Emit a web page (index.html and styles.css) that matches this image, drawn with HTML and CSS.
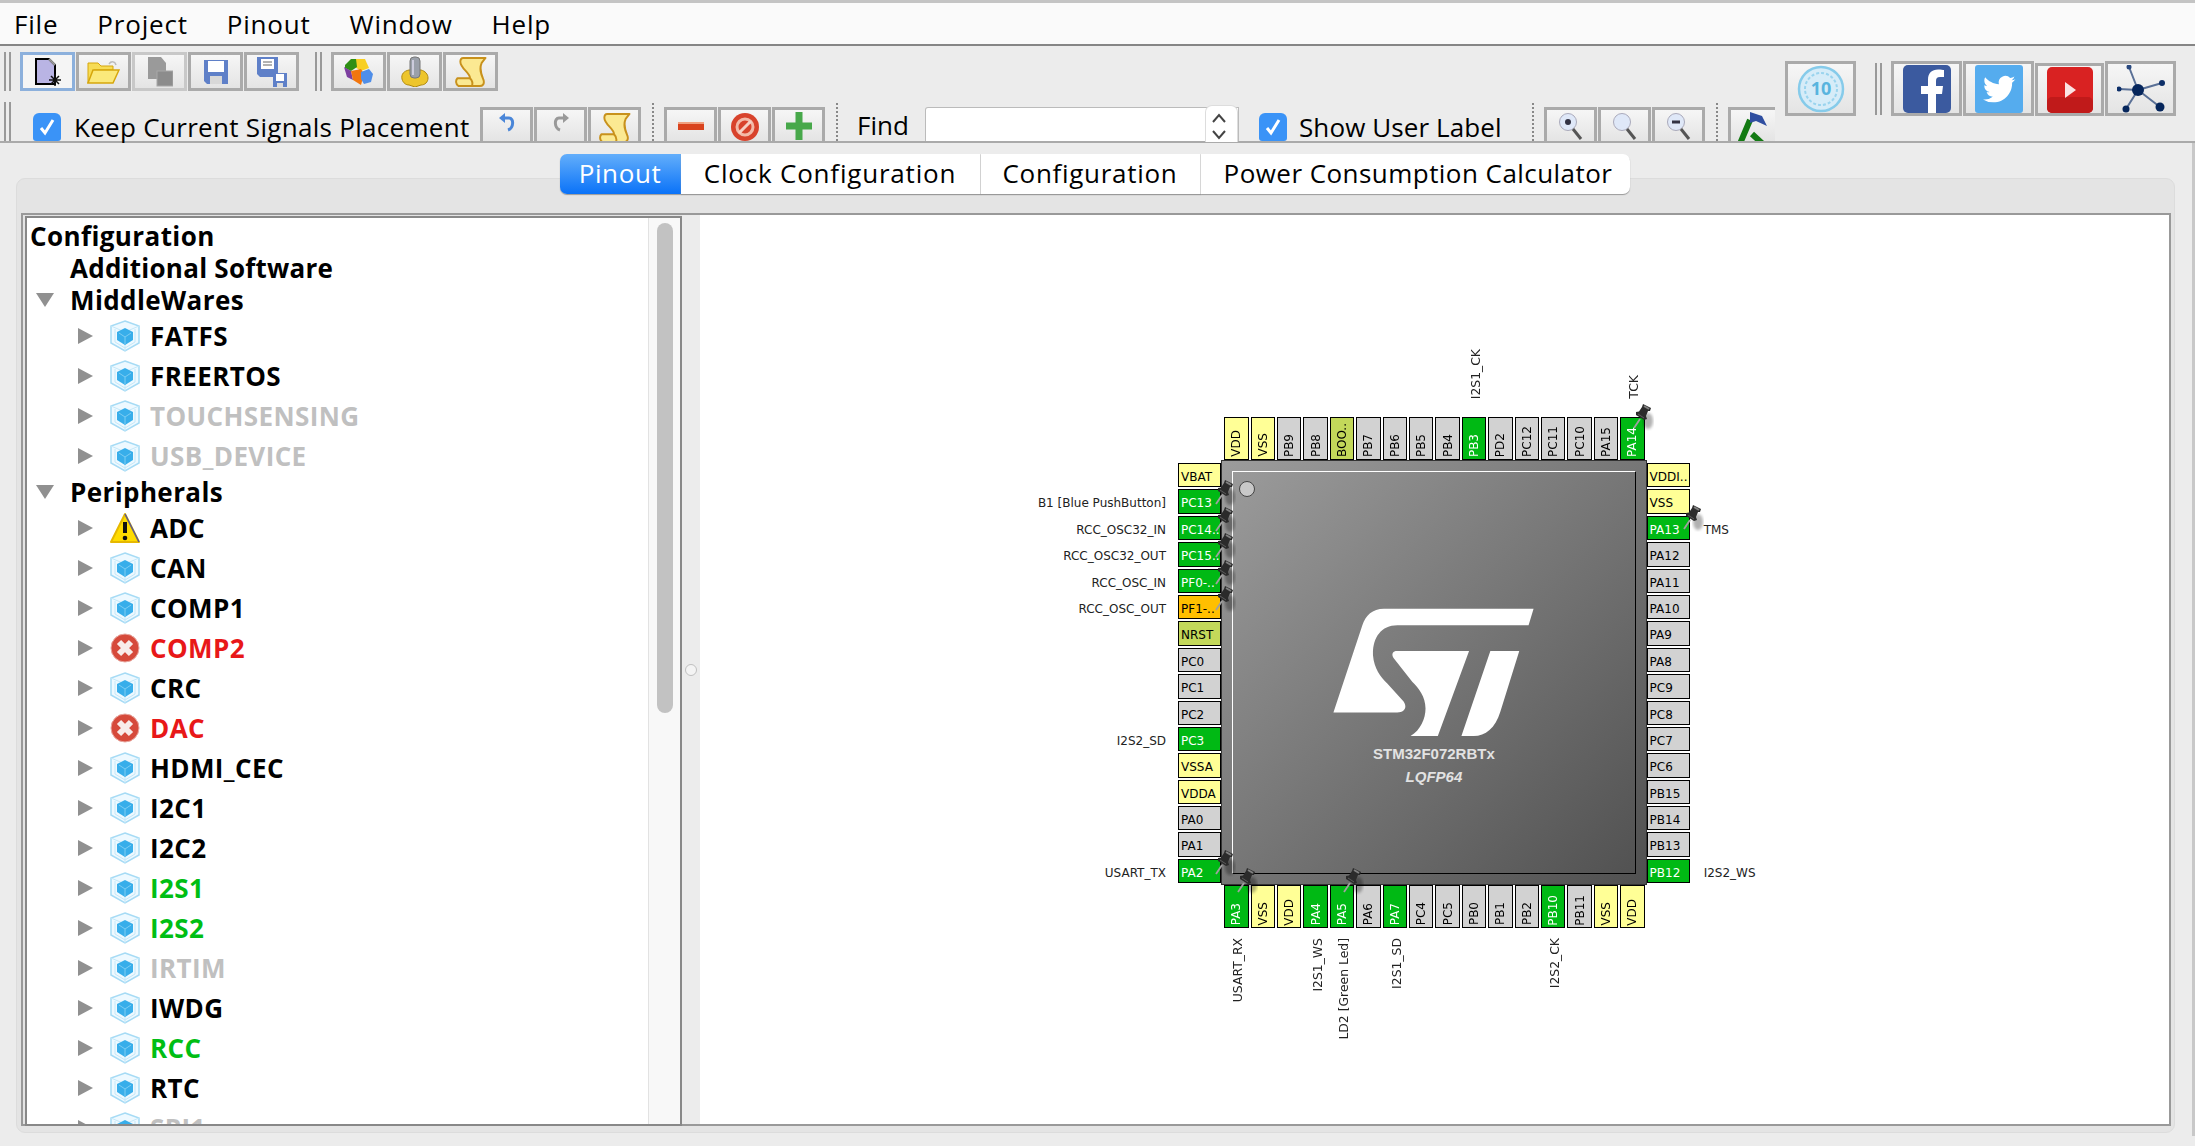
FILE: index.html
```html
<!DOCTYPE html>
<html lang="en">
<head>
    <meta charset="UTF-8">
    <title>STM32CubeMX</title>
    <link rel="stylesheet" href="styles.css">
</head>
<body>

    <!-- Shared icons -->
    <svg class="icon-defs" width="0" height="0">
        <filter id="soft"><feGaussianBlur stdDeviation="1.5"/></filter>
        <symbol id="cube" viewBox="0 0 32 32">
            <polygon points="16,1 30,6 30,23 16,31 2,23 2,6" fill="#eef9ff" stroke="#a6dbf5" stroke-width="1.5"/>
            <path d="M2 6l14 6 14-6M16 12v19M6 9v13l10 6 10-6V9" fill="none" stroke="#c4e8f9"/>
            <polygon points="16,8 24,12 24,20 16,25 8,20 8,12" fill="#38aeea"/>
            <path d="M16 17v7M16 17l-6-4M16 17l6-4" fill="none" stroke="#7ccdf3"/>
        </symbol>
        <symbol id="warn" viewBox="0 0 32 32">
            <polygon points="16,2 30,30 2,30" fill="#ffdc00" stroke="#e6b800" stroke-width="2" stroke-linejoin="round"/>
            <path d="M30 30l-14-28" stroke="#5a5a90" stroke-width="1.5"/>
            <path d="M16 10v11" stroke="#111" stroke-width="4"/>
            <circle cx="16" cy="26" r="2.3" fill="#111"/>
        </symbol>
        <symbol id="error" viewBox="0 0 32 32">
            <circle cx="16" cy="16" r="14" fill="#d64a3b" stroke="#e8a8a0"/>
            <path d="M10 10l12 12M22 10L10 22" stroke="#f8ecea" stroke-width="6"/>
        </symbol>
        <symbol id="pushpin" viewBox="0 0 26 30">
            <ellipse cx="15" cy="17" rx="5" ry="8" fill="#000" opacity=".3" filter="url(#soft)"/>
            <path d="M7 15L1 24" stroke="#a0a0a0" stroke-width="1.8"/>
            <path d="M10 0L18 4L17 7L15 7L13 12L14 15L11 16L3 11L3 8L6 7.500L9 3Z" fill="#2b2b2b"/>
            <path d="M11 2L16 5" stroke="#808080" stroke-width="2"/>
            <path d="M5 10L11 14" stroke="#5c5c5c"/>
        </symbol>
        <symbol id="scroll" viewBox="0 0 32 32">
            <path d="M8 2H31L27 7C24 14 27 20 29 25C30 29 28 31 25 31H3C0 29 0 25 2 23H15C15 17 5 13 5 6C5 4 6 2 8 2Z" fill="#fbe992" stroke="#c8911c" stroke-width="2" stroke-linejoin="round"/>
            <path d="M15 23C17 25 18 28 17 31" fill="none" stroke="#c8911c" stroke-width="2"/>
        </symbol>
    </svg>

    <!-- Menu -->
    <nav class="menubar">
        <span>File</span>
        <span>Project</span>
        <span>Pinout</span>
        <span>Window</span>
        <span>Help</span>
    </nav>

    <!-- Toolbars -->
    <header class="toolbars">
        <div class="tool-rows">
            <div class="tool-row row-one">
                <div class="grip"></div>
                <div class="btn-group">
                    <div class="btn btn-active">
                        <svg width="28" height="30" viewBox="0 0 28 30">
                            <path d="M2 2h13l6 6v19H2z" fill="#b9b4e4" stroke="#000" stroke-width="2"/>
                            <path d="M15 2l6 6" stroke="#999" stroke-width="2"/>
                            <path d="M21 17v12M15 23h12M17 19l8 8M25 19l-8 8" stroke="#111" stroke-width="1.5"/>
                        </svg>
                    </div>
                    <div class="btn">
                        <svg width="33" height="24" viewBox="0 0 33 24">
                            <path d="M1 3h10l3 3h12v4H7L1 23z" fill="#f7dc55" stroke="#d6a60c"/>
                            <path d="M6 10h26l-6 13H1z" fill="#fbe97b" stroke="#d6a60c" stroke-width="1.5"/>
                            <path d="M22 4c2-3 6-3 7 1" fill="none" stroke="#bbb" stroke-width="1.5"/>
                        </svg>
                    </div>
                    <div class="btn btn-off">
                        <svg width="26" height="30" viewBox="0 0 26 30">
                            <path d="M1 0h13l5 6v16H1z" fill="#9a9a9a"/>
                            <rect x="10" y="14" width="16" height="15" fill="#8c8c8c" stroke="#a8a8a8"/>
                        </svg>
                    </div>
                    <div class="btn">
                        <svg width="24" height="24" viewBox="0 0 24 24">
                            <path d="M0 0h24v24H3l-3-3z" fill="#5f80c8"/>
                            <rect x="4" y="1" width="16" height="11" fill="#fff"/>
                            <rect x="6" y="16" width="12" height="8" fill="#d8d8d8"/>
                        </svg>
                    </div>
                    <div class="btn">
                        <svg width="30" height="30" viewBox="0 0 30 30">
                            <path d="M0 0h21v20H3l-3-3z" fill="#5f80c8"/>
                            <rect x="4" y="2" width="13" height="10" fill="#fff"/>
                            <path d="M6 5h9M6 8h9" stroke="#666"/>
                            <rect x="16" y="16" width="14" height="14" fill="#5f80c8"/>
                            <rect x="19" y="17" width="8" height="7" fill="#fff"/>
                            <rect x="20" y="26" width="6" height="4" fill="#ddd"/>
                        </svg>
                    </div>
                </div>
                <div class="grip grip-mid"></div>
                <div class="btn-group">
                    <div class="btn">
                        <svg width="29" height="28" viewBox="0 0 29 28">
                            <path d="M11 1h10l4 9-8 3-6-4z" fill="#f7cf24"/>
                            <path d="M1 7l6-6h5l1 8-6 4-6-3z" fill="#2f8f15"/>
                            <path d="M0 9l7 4 2 9-6-3z" fill="#7d3fa0"/>
                            <path d="M7 13l10-2 3 5-3 11-8-5z" fill="#f2760e"/>
                            <path d="M17 14l8-3 4 5-2 8-7 2-3-5z" fill="#4f8ee8"/>
                        </svg>
                    </div>
                    <div class="btn">
                        <svg width="28" height="31" viewBox="0 0 28 31">
                            <path d="M8 14C3 15 0 18 1 23c1 4 4 6 7 6l6 2 6-2c4 0 7-3 7-7 0-4-3-7-7-8z" fill="#edc52c" stroke="#b08a10"/>
                            <rect x="9" y="1" width="10" height="21" rx="4" fill="#9aa0aa" stroke="#777"/>
                            <path d="M12 4v15" stroke="#ccd" stroke-width="2"/>
                        </svg>
                    </div>
                    <div class="btn"><svg width="32" height="31"><use href="#scroll"/></svg></div>
                </div>
            </div>

            <div class="tool-row row-two">
                <div class="grip grip-low"></div>
                <div class="check check-keep"><svg width="20" height="20" viewBox="0 0 20 20"><path d="M4 11l4 5 8-13" fill="none" stroke="#fff" stroke-width="3"/></svg></div>
                <span class="tool-label label-keep">Keep Current Signals Placement</span>
                <div class="btn-group group-low">
                    <div class="btn btn-small">
                        <svg width="16" height="20" viewBox="0 0 16 20">
                            <path d="M3 6h7c5 0 5 10-1 12" fill="none" stroke="#4a86d8" stroke-width="3"/>
                            <path d="M6 1L0 6l6 5z" fill="#4a86d8"/>
                        </svg>
                    </div>
                    <div class="btn btn-small">
                        <svg width="16" height="20" viewBox="0 0 16 20">
                            <path d="M13 6H6c-5 0-5 10 1 12" fill="none" stroke="#999" stroke-width="3"/>
                            <path d="M10 1l6 5-6 5z" fill="#999"/>
                        </svg>
                    </div>
                    <div class="btn btn-small"><svg width="32" height="31"><use href="#scroll"/></svg></div>
                </div>
                <div class="dots"></div>
                <div class="btn-group group-low">
                    <div class="btn btn-small btn-minus"><svg width="26" height="8"><rect width="26" height="8" fill="#d9431e"/><rect width="26" height="2" fill="#f0a080"/></svg></div>
                    <div class="btn btn-small">
                        <svg width="30" height="30" viewBox="0 0 30 30">
                            <circle cx="15" cy="15" r="14" fill="#d8432c"/>
                            <circle cx="15" cy="15" r="8" fill="none" stroke="#f3b9a8" stroke-width="3"/>
                            <path d="M9 21L21 9" stroke="#f6d0c4" stroke-width="3"/>
                        </svg>
                    </div>
                    <div class="btn btn-small"><svg width="26" height="28" viewBox="0 0 26 28"><path d="M13 0v28M0 14h26" stroke="#47a84a" stroke-width="7"/></svg></div>
                </div>
                <div class="dots"></div>
                <span class="tool-label label-find">Find</span>
                <div class="find-box">
                    <div class="find-spin">
                        <svg width="14" height="28" viewBox="0 0 14 28"><path d="M1 9l6-7 6 7M1 18l6 7 6-7" fill="none" stroke="#444" stroke-width="2"/></svg>
                    </div>
                </div>
                <div class="check check-user"><svg width="20" height="20" viewBox="0 0 20 20"><path d="M4 11l4 5 8-13" fill="none" stroke="#fff" stroke-width="3"/></svg></div>
                <span class="tool-label label-user">Show User Label</span>
                <div class="dots"></div>
                <div class="btn-group group-low">
                    <div class="btn btn-small">
                        <svg width="26" height="32" viewBox="0 0 26 32">
                            <circle cx="10" cy="10" r="8.5" fill="#dfe8f8" stroke="#aab"/>
                            <circle cx="10" cy="10" r="3" fill="#334"/>
                            <path d="M15 17l8 10" stroke="#555" stroke-width="3"/>
                        </svg>
                    </div>
                    <div class="btn btn-small">
                        <svg width="26" height="32" viewBox="0 0 26 32">
                            <circle cx="10" cy="10" r="8.5" fill="#dfe8f8" stroke="#aab"/>
                            <path d="M15 17l8 10" stroke="#555" stroke-width="3"/>
                        </svg>
                    </div>
                    <div class="btn btn-small">
                        <svg width="26" height="32" viewBox="0 0 26 32">
                            <circle cx="10" cy="10" r="8.5" fill="#dfe8f8" stroke="#aab"/>
                            <rect x="6" y="8.5" width="8" height="3" fill="#334"/>
                            <path d="M15 17l8 10" stroke="#555" stroke-width="3"/>
                        </svg>
                    </div>
                </div>
                <div class="dots"></div>
                <div class="btn btn-small btn-flag">
                    <svg width="30" height="34" viewBox="0 0 30 34">
                        <path d="M12 8L1 34h26L14 22" fill="none" stroke="#137a13" stroke-width="6"/>
                        <path d="M12 0l12 4 5 10-11-5-6 2z" fill="#2f4ea0"/>
                    </svg>
                </div>
            </div>
        </div>

        <div class="social">
            <div class="btn btn-big">
                <svg width="48" height="48" viewBox="0 0 48 48">
                    <circle cx="24" cy="24" r="22" fill="#d6ecf8" stroke="#86cbea" stroke-width="2.5"/>
                    <circle cx="24" cy="24" r="16" fill="none" stroke="#9ad4ee" stroke-width="2" stroke-dasharray="3 2"/>
                    <text x="24" y="30" class="ten">10</text>
                </svg>
            </div>
            <div class="grip grip-social"></div>
            <div class="btn btn-big">
                <svg width="48" height="48" viewBox="0 0 48 48">
                    <rect width="48" height="48" rx="5" fill="#3b5a9f"/>
                    <path d="M33 48V29h6l1-8h-7v-5c0-2.500 1-4 4-4h4V5c-1 0-3-.5-6-.5-6 0-10 3.500-10 10V21h-7v8h7v19z" fill="#fff"/>
                </svg>
            </div>
            <div class="btn btn-big">
                <svg width="48" height="48" viewBox="0 0 48 48">
                    <rect width="48" height="48" rx="3" fill="#55acee"/>
                    <g transform="translate(8 8) scale(1.35)">
                        <path d="M23.950 4.570a10 10 0 01-2.820.770 4.960 4.960 0 002.160-2.720c-.950.550-2 .950-3.120 1.170a4.920 4.920 0 00-8.380 4.480C7.690 8.090 4.070 6.130 1.640 3.160a4.820 4.820 0 00-.670 2.480c0 1.710.870 3.210 2.190 4.100a4.900 4.900 0 01-2.230-.620v.060a4.920 4.920 0 003.950 4.830 4.900 4.900 0 01-2.210.080 4.940 4.940 0 004.600 3.420A9.870 9.870 0 010 19.540a14 14 0 007.550 2.210c9.060 0 14.010-7.500 14.010-13.980 0-.210 0-.420-.020-.630a9.940 9.940 0 002.460-2.550z" fill="#fff"/>
                    </g>
                </svg>
            </div>
            <div class="btn btn-big btn-yt">
                <svg width="46" height="46" viewBox="0 0 46 46">
                    <rect width="46" height="46" rx="5" fill="#d92222"/>
                    <rect y="30" width="46" height="16" rx="5" fill="#c01a1a"/>
                    <polygon points="18,15 29,23 18,31" fill="#fbe3e3"/>
                </svg>
            </div>
            <div class="btn btn-big">
                <svg width="48" height="48" viewBox="0 0 48 48">
                    <path d="M21 25L12 2M21 25L45 18M21 25L2 24M21 25L9 44M21 25L43 42" stroke="#5a7096" stroke-width="2"/>
                    <circle cx="21" cy="25" r="6" fill="#06265c"/>
                    <circle cx="12" cy="2" r="2.500" fill="#2a4a80"/>
                    <circle cx="45" cy="18" r="3" fill="#0d2f68"/>
                    <circle cx="2" cy="24" r="2.500" fill="#0d2f68"/>
                    <circle cx="9" cy="44" r="3.500" fill="#06265c"/>
                    <circle cx="43" cy="42" r="4.500" fill="#06265c"/>
                </svg>
            </div>
        </div>
    </header>

    <main class="content">
        <div class="tabs">
            <div class="tab tab-pinout">Pinout</div>
            <div class="tab tab-clock">Clock Configuration</div>
            <div class="tab tab-config">Configuration</div>
            <div class="tab tab-power">Power Consumption Calculator</div>
        </div>

        <section class="tab-panel">
            <div class="split">

                <!-- Tree on the left -->
                <div class="tree">
                    <div class="tree-list">
                        <div class="row head head-root">Configuration</div>
                        <div class="row head head-plain">Additional Software</div>
                        <div class="row head"><i class="arrow-down"></i>MiddleWares</div>
                        <div class="row"><i class="arrow"></i><svg class="row-icon"><use href="#cube"/></svg>FATFS</div>
                        <div class="row"><i class="arrow"></i><svg class="row-icon"><use href="#cube"/></svg>FREERTOS</div>
                        <div class="row off"><i class="arrow"></i><svg class="row-icon"><use href="#cube"/></svg>TOUCHSENSING</div>
                        <div class="row off"><i class="arrow"></i><svg class="row-icon"><use href="#cube"/></svg>USB_DEVICE</div>
                        <div class="row head"><i class="arrow-down"></i>Peripherals</div>
                        <div class="row"><i class="arrow"></i><svg class="row-icon"><use href="#warn"/></svg>ADC</div>
                        <div class="row"><i class="arrow"></i><svg class="row-icon"><use href="#cube"/></svg>CAN</div>
                        <div class="row"><i class="arrow"></i><svg class="row-icon"><use href="#cube"/></svg>COMP1</div>
                        <div class="row err"><i class="arrow"></i><svg class="row-icon"><use href="#error"/></svg>COMP2</div>
                        <div class="row"><i class="arrow"></i><svg class="row-icon"><use href="#cube"/></svg>CRC</div>
                        <div class="row err"><i class="arrow"></i><svg class="row-icon"><use href="#error"/></svg>DAC</div>
                        <div class="row"><i class="arrow"></i><svg class="row-icon"><use href="#cube"/></svg>HDMI_CEC</div>
                        <div class="row"><i class="arrow"></i><svg class="row-icon"><use href="#cube"/></svg>I2C1</div>
                        <div class="row"><i class="arrow"></i><svg class="row-icon"><use href="#cube"/></svg>I2C2</div>
                        <div class="row on"><i class="arrow"></i><svg class="row-icon"><use href="#cube"/></svg>I2S1</div>
                        <div class="row on"><i class="arrow"></i><svg class="row-icon"><use href="#cube"/></svg>I2S2</div>
                        <div class="row off"><i class="arrow"></i><svg class="row-icon"><use href="#cube"/></svg>IRTIM</div>
                        <div class="row"><i class="arrow"></i><svg class="row-icon"><use href="#cube"/></svg>IWDG</div>
                        <div class="row on"><i class="arrow"></i><svg class="row-icon"><use href="#cube"/></svg>RCC</div>
                        <div class="row"><i class="arrow"></i><svg class="row-icon"><use href="#cube"/></svg>RTC</div>
                        <div class="row off"><i class="arrow"></i><svg class="row-icon"><use href="#cube"/></svg>SPI1</div>
                    </div>
                    <div class="tree-scroll"><div class="tree-thumb"></div></div>
                </div>

                <div class="splitter"><div class="splitter-dot"></div></div>

                <!-- Chip view -->
                <div class="canvas">
                    <div class="package">
                        <div class="corner"></div>
                        <div class="pins pins-top">
                            <div class="pin yellow"><span>VDD</span></div>
                            <div class="pin yellow"><span>VSS</span></div>
                            <div class="pin gray"><span>PB9</span></div>
                            <div class="pin gray"><span>PB8</span></div>
                            <div class="pin olive"><span>BOO..</span></div>
                            <div class="pin gray"><span>PB7</span></div>
                            <div class="pin gray"><span>PB6</span></div>
                            <div class="pin gray"><span>PB5</span></div>
                            <div class="pin gray"><span>PB4</span></div>
                            <div class="pin green"><span>PB3</span><b class="signal">I2S1_CK</b></div>
                            <div class="pin gray"><span>PD2</span></div>
                            <div class="pin gray"><span>PC12</span></div>
                            <div class="pin gray"><span>PC11</span></div>
                            <div class="pin gray"><span>PC10</span></div>
                            <div class="pin gray"><span>PA15</span></div>
                            <div class="pin green"><span>PA14</span><b class="signal">TCK</b><svg class="pushpin"><use href="#pushpin"/></svg></div>
                        </div>
                        <div class="corner"></div>

                        <div class="pins pins-left">
                            <div class="pin yellow">VBAT</div>
                            <div class="pin green">PC13<b class="signal">B1 [Blue PushButton]</b><svg class="pushpin"><use href="#pushpin"/></svg></div>
                            <div class="pin green">PC14..<b class="signal">RCC_OSC32_IN</b><svg class="pushpin"><use href="#pushpin"/></svg></div>
                            <div class="pin green">PC15..<b class="signal">RCC_OSC32_OUT</b><svg class="pushpin"><use href="#pushpin"/></svg></div>
                            <div class="pin green">PF0-..<b class="signal">RCC_OSC_IN</b><svg class="pushpin"><use href="#pushpin"/></svg></div>
                            <div class="pin orange">PF1-..<b class="signal">RCC_OSC_OUT</b><svg class="pushpin"><use href="#pushpin"/></svg></div>
                            <div class="pin olive">NRST</div>
                            <div class="pin gray">PC0</div>
                            <div class="pin gray">PC1</div>
                            <div class="pin gray">PC2</div>
                            <div class="pin green">PC3<b class="signal">I2S2_SD</b></div>
                            <div class="pin yellow">VSSA</div>
                            <div class="pin yellow">VDDA</div>
                            <div class="pin gray">PA0</div>
                            <div class="pin gray">PA1</div>
                            <div class="pin green">PA2<b class="signal">USART_TX</b><svg class="pushpin"><use href="#pushpin"/></svg></div>
                        </div>

                        <div class="chip">
                            <div class="chip-face">
                                <div class="chip-dot"></div>
                                <svg class="st-logo" viewBox="158 138 602 385">
                                    <path d="M760 140L745 190H350C300 190 275 230 277 280C280 320 300 345 320 365L365 415C382 432 375 452 350 452H158L245 190C255 160 275 140 310 140Z" fill="#fff"/>
                                    <path d="M345 267H566L472 523H390C420 505 435 470 435 440C435 405 415 380 395 360L340 290C332 278 335 270 345 267Z" fill="#fff"/>
                                    <path d="M630 267H717L660 450C645 500 615 523 580 523H543Z" fill="#fff"/>
                                </svg>
                                <div class="chip-name">STM32F072RBTx</div>
                                <div class="chip-package">LQFP64</div>
                            </div>
                        </div>

                        <div class="pins pins-right">
                            <div class="pin yellow">VDDI..</div>
                            <div class="pin yellow">VSS</div>
                            <div class="pin green">PA13<b class="signal">TMS</b><svg class="pushpin"><use href="#pushpin"/></svg></div>
                            <div class="pin gray">PA12</div>
                            <div class="pin gray">PA11</div>
                            <div class="pin gray">PA10</div>
                            <div class="pin gray">PA9</div>
                            <div class="pin gray">PA8</div>
                            <div class="pin gray">PC9</div>
                            <div class="pin gray">PC8</div>
                            <div class="pin gray">PC7</div>
                            <div class="pin gray">PC6</div>
                            <div class="pin gray">PB15</div>
                            <div class="pin gray">PB14</div>
                            <div class="pin gray">PB13</div>
                            <div class="pin green">PB12<b class="signal">I2S2_WS</b></div>
                        </div>

                        <div class="corner"></div>
                        <div class="pins pins-bottom">
                            <div class="pin green"><span>PA3</span><b class="signal">USART_RX</b><svg class="pushpin"><use href="#pushpin"/></svg></div>
                            <div class="pin yellow"><span>VSS</span></div>
                            <div class="pin yellow"><span>VDD</span></div>
                            <div class="pin green"><span>PA4</span><b class="signal">I2S1_WS</b></div>
                            <div class="pin green"><span>PA5</span><b class="signal">LD2 [Green Led]</b><svg class="pushpin"><use href="#pushpin"/></svg></div>
                            <div class="pin gray"><span>PA6</span></div>
                            <div class="pin green"><span>PA7</span><b class="signal">I2S1_SD</b></div>
                            <div class="pin gray"><span>PC4</span></div>
                            <div class="pin gray"><span>PC5</span></div>
                            <div class="pin gray"><span>PB0</span></div>
                            <div class="pin gray"><span>PB1</span></div>
                            <div class="pin gray"><span>PB2</span></div>
                            <div class="pin green"><span>PB10</span><b class="signal">I2S2_CK</b></div>
                            <div class="pin gray"><span>PB11</span></div>
                            <div class="pin yellow"><span>VSS</span></div>
                            <div class="pin yellow"><span>VDD</span></div>
                        </div>
                        <div class="corner"></div>
                    </div>
                </div>

            </div>
        </section>
    </main>

</body>
</html>
```

FILE: styles.css
```css
body {
    margin: 0;
    width: 2195px;
    height: 1146px;
    overflow: hidden;
    background-color: #ececec;
    font-family: "Open Sans", sans-serif;
    font-size: 26px;
    color: #000;
}

.icon-defs {
    position: absolute;
}

/* Menu */
.menubar {
    box-sizing: border-box;
    height: 46px;
    padding-left: 14px;
    display: flex;
    align-items: center;
    gap: 39px;
    background-color: #fafafa;
    border-top: 3px solid #c4c4c4;
    border-bottom: 2px solid #858585;
    letter-spacing: 0.8px;
}

/* Toolbars */
.toolbars {
    height: 95px;
    display: flex;
    border-bottom: 2px solid #aaa;
    box-sizing: content-box;
}

.tool-rows {
    width: 1785px;
    flex: none;
}

.tool-row {
    display: flex;
}

.row-one {
    height: 40px;
    margin-top: 6px;
    padding-left: 4px;
}

.row-two {
    height: 39px;
    margin-top: 10px;
    padding-left: 4px;
}

.grip {
    box-sizing: border-box;
    width: 7px;
    height: 39px;
    flex: none;
    border-left: 2px solid #999;
    border-right: 2px solid #999;
}

.grip-mid {
    margin: 0 9px 0 16px;
}

.grip-low {
    height: 39px;
}

.grip-social {
    height: 52px;
    margin: 2px 8px 0 18px;
}

.btn-group {
    display: flex;
    gap: 1px;
    margin-left: 9px;
}

.grip-mid + .btn-group {
    margin-left: 0;
}

.btn {
    box-sizing: border-box;
    width: 55px;
    height: 39px;
    flex: none;
    display: flex;
    align-items: center;
    justify-content: center;
    border: 3px solid #aaa;
    background: linear-gradient(#f6f6f6, #e4e4e4);
}

.btn-active {
    border-color: #8cb0dc;
    background: #f5f5f5;
}

.btn-off {
    border-color: #c8c8c8;
}

.group-low {
    margin-left: 0;
    margin-top: 5px;
}

/* the second row is cut by the line under the toolbars */
.btn-small {
    width: 53px;
    height: 34px;
    overflow: hidden;
    align-items: flex-start;
    padding-top: 2px;
    border-bottom: none;
}

.btn-minus {
    padding-top: 12px;
}

.btn-flag {
    width: 47px;
    margin-top: 5px;
    border-right: none;
}

.check {
    box-sizing: border-box;
    width: 28px;
    height: 28px;
    flex: none;
    display: flex;
    align-items: center;
    justify-content: center;
    background-color: #3a93f7;
    border-radius: 6px 6px 3px 3px;
    margin-top: 11px;
}

.check-keep {
    margin-left: 22px;
}

.check-user {
    margin-left: 20px;
}

.tool-label {
    flex: none;
    line-height: 28px;
    margin-top: 11px;
}

.label-keep {
    width: 406px;
    margin-left: 13px;
    letter-spacing: 0.3px;
}

.label-find {
    width: 68px;
    margin-left: 9px;
    margin-top: 9px;
}

.label-user {
    width: 222px;
    margin-left: 12px;
    letter-spacing: 0.1px;
}

.dots {
    width: 0;
    height: 38px;
    flex: none;
    margin: 1px 10px 0 11px;
    border-left: 2px dotted #888;
}

.find-box {
    position: relative;
    box-sizing: border-box;
    width: 314px;
    height: 34px;
    flex: none;
    margin-top: 5px;
    background-color: #fff;
    border: 1px solid #bbb;
    border-bottom: none;
    border-radius: 3px 0 0 0;
}

.find-spin {
    position: absolute;
    right: 0;
    top: -3px;
    width: 33px;
    height: 37px;
    display: flex;
    justify-content: center;
    padding: 7px 6px 0 0;
    box-sizing: border-box;
    background-color: #fff;
    border: 1px solid #ddd;
    border-bottom: none;
    border-radius: 7px 7px 0 0;
}

.social {
    display: flex;
    align-items: flex-start;
    padding-top: 15px;
    gap: 1px;
}

.btn-big {
    width: 71px;
    height: 55px;
}

.btn-yt {
    width: 69px;
    height: 53px;
    margin-top: 2px;
}

.ten {
    font-family: "Open Sans", sans-serif;
    font-size: 18px;
    font-weight: 700;
    fill: #58b4de;
    text-anchor: middle;
}

/* Tabs and the panel under them */
.content {
    position: relative;
    padding: 11px 0 0 16px;
    border-right: 3px solid #c8c8c8;
    height: 993px;
    box-sizing: border-box;
}

.tabs {
    position: relative;
    z-index: 1;
    width: 2157px;
    height: 40px;
    display: flex;
    justify-content: center;
    margin-bottom: -16px;
}

.tab {
    box-sizing: border-box;
    display: flex;
    align-items: center;
    justify-content: center;
    background-color: #fff;
    box-shadow: 0 1px 1px #999;
    border-right: 1px solid #ddd;
    padding-bottom: 2px;
    letter-spacing: 0.6px;
}

.tab-pinout {
    width: 121px;
    color: #fff;
    background: linear-gradient(#63aefb, #0a72f8);
    border-radius: 7px 0 0 7px;
    border-right: none;
}

.tab-clock {
    width: 300px;
    letter-spacing: 0.8px;
}

.tab-config {
    width: 220px;
    letter-spacing: 0.7px;
}

.tab-power {
    width: 429px;
    padding-left: 6px;
    letter-spacing: 0.45px;
    border-right: none;
    border-radius: 0 7px 7px 0;
}

.tab-panel {
    box-sizing: border-box;
    width: 2159px;
    height: 955px;
    padding: 34px 3px 6px 4px;
    background-color: #e4e4e4;
    border: 1px solid #dcdcdc;
    border-radius: 9px;
}

.split {
    box-sizing: border-box;
    height: 100%;
    display: flex;
    border: 2px solid #999;
    padding-left: 2px;
}

/* Tree */
.tree {
    box-sizing: border-box;
    width: 657px;
    height: 910px;
    margin-top: 1px;
    flex: none;
    display: flex;
    background-color: #fff;
    border: 2px solid #888;
    overflow: hidden;
}

.tree-list {
    flex: 1;
    padding-top: 2px;
    font-weight: 700;
    letter-spacing: 0.4px;
}

.row {
    height: 40px;
    display: flex;
    align-items: center;
    padding-left: 51px;
}

.head {
    height: 32px;
    padding-left: 9px;
}

.head-root {
    padding-left: 3px;
}

.head-plain {
    padding-left: 43px;
    letter-spacing: 0.25px;
}

.off {
    color: #c0c0c0;
}

.err {
    color: #e81818;
}

.on {
    color: #00be14;
}

.arrow {
    width: 0;
    height: 0;
    margin-right: 16px;
    border-left: 15px solid #909090;
    border-top: 8px solid transparent;
    border-bottom: 8px solid transparent;
}

.arrow-down {
    width: 0;
    height: 0;
    margin-right: 16px;
    border-top: 14px solid #909090;
    border-left: 9px solid transparent;
    border-right: 9px solid transparent;
}

.row-icon {
    width: 32px;
    height: 32px;
    margin-right: 9px;
    flex: none;
}

.tree-scroll {
    box-sizing: border-box;
    width: 32px;
    flex: none;
    padding: 5px 7px 0 8px;
    background-color: #f8f8f8;
    border-left: 1px solid #e2e2e2;
}

.tree-thumb {
    height: 490px;
    background-color: #c2c2c2;
    border-radius: 8px;
}

.splitter {
    width: 18px;
    flex: none;
    display: flex;
    align-items: center;
    justify-content: center;
    background-color: #ececec;
}

.splitter-dot {
    box-sizing: border-box;
    width: 12px;
    height: 12px;
    background-color: #f4f4f4;
    border: 1px solid #c0c0c0;
    border-radius: 50%;
}

/* Chip diagram */
.canvas {
    flex: 1;
    background-color: #fff;
    padding: 202px 0 0 478px;
}

.package {
    display: grid;
    grid-template-columns: 43.3px 425.3px 43.1px;
    grid-template-rows: 42.7px 425px 43.7px;
    font-family: "DejaVu Sans", sans-serif;
    font-size: 12px;
}

.pins {
    position: relative;
    z-index: 2;
    display: flex;
    gap: 2px;
}

.pins-left,
.pins-right {
    flex-direction: column;
    padding-top: 3.3px;
}

.pins-top,
.pins-bottom {
    padding-left: 3px;
}

.pin {
    position: relative;
    box-sizing: border-box;
    border: 1px solid #000;
}

.pins-left .pin,
.pins-right .pin {
    height: 24.4px;
    line-height: 26px;
    padding-left: 2px;
    white-space: nowrap;
}

.pins-top .pin,
.pins-bottom .pin {
    width: 24.4px;
    display: flex;
    justify-content: center;
    align-items: flex-end;
    padding-bottom: 2px;
}

.pin span {
    writing-mode: vertical-rl;
    transform: rotate(180deg);
    line-height: 22px;
}

.yellow {
    background-color: #ffff96;
}

.gray {
    background-color: #d2d2d2;
}

.olive {
    background-color: #c3d85a;
}

.green {
    background-color: #00b914;
    color: #fff;
}

.orange {
    background-color: #ffbf00;
}

.signal {
    position: absolute;
    font-weight: 400;
    color: #222;
    white-space: nowrap;
}

.pins-left .signal {
    right: calc(100% + 13px);
    top: 0;
}

.pins-right .signal {
    left: calc(100% + 15px);
    top: 0;
}

.pins-top .signal,
.pins-bottom .signal {
    left: 50%;
    margin-left: -5px;
    writing-mode: vertical-rl;
    transform: rotate(180deg);
    line-height: 14px;
    font-size: 12.4px;
}

.pins-top .signal {
    bottom: calc(100% + 19px);
}

.pins-bottom .signal {
    top: calc(100% + 11px);
}

.pushpin {
    position: absolute;
    z-index: 3;
    width: 26px;
    height: 30px;
}

.pins-left .pushpin {
    left: 36px;
    top: -10px;
}

.pins-right .pushpin {
    left: 35px;
    top: -12px;
}

.pins-top .pushpin {
    left: 12px;
    top: -14px;
}

.pins-bottom .pushpin {
    left: 12px;
    top: -18px;
}

.chip {
    box-sizing: border-box;
    padding: 10px;
    background: linear-gradient(135deg, #9c9c9c, #505050);
    border: 1px solid #333;
}

.chip-face {
    position: relative;
    box-sizing: border-box;
    height: 100%;
    display: flex;
    flex-direction: column;
    align-items: center;
    padding-top: 136px;
    border: 1px solid #000;
    border-top-color: #fff;
    border-left-color: #fff;
    font-family: "Liberation Sans", sans-serif;
    font-weight: 700;
    color: #e2e2e2;
}

.chip-dot {
    position: absolute;
    left: 6px;
    top: 9px;
    box-sizing: border-box;
    width: 16px;
    height: 16px;
    background-color: #c8c8c8;
    border: 1px solid #444;
    border-radius: 50%;
}

.st-logo {
    width: 201px;
    height: 128px;
}

.chip-name {
    margin-top: 9px;
    font-size: 15px;
    line-height: 18px;
}

.chip-package {
    margin-top: 5px;
    font-size: 15px;
    line-height: 18px;
    font-style: italic;
}
```
